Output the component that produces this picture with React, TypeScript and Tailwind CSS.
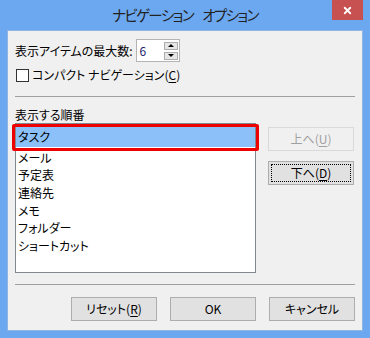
import { X } from 'lucide-react'

const font = "font-['Noto_Sans_CJK_JP',sans-serif] [font-feature-settings:'palt']"

const items = ['メール', '予定表', '連絡先', 'メモ', 'フォルダー', 'ショートカット']

function Mnemonic({ label, letter }: { label: string; letter: string }) {
  return (
    <span>
      {label}(<span className="underline underline-offset-2">{letter}</span>)
    </span>
  )
}

function Button({ children, disabled, focused }: { children: React.ReactNode; disabled?: boolean; focused?: boolean }) {
  return (
    <div
      className={`relative flex h-[24px] w-[86px] items-center justify-center border text-[12px] ${
        disabled
          ? 'border-[#d9d9d9] bg-[#f0f0f0] text-[#a0a0a0]'
          : 'border-[#adadad] bg-[#e1e1e1] text-[#000]'
      }`}
    >
      {focused && <div className="absolute inset-[2px] border border-dotted border-black" />}
      {children}
    </div>
  )
}

export default function App() {
  return (
    <div className={`flex h-[338px] w-[370px] flex-col bg-[#6ca8f0] px-[7px] pb-[7px] ${font}`}>
      {/* タイトルバー */}
      <div className="relative flex h-[30px] shrink-0 items-center justify-center">
        <span className="flex gap-[9px] pb-[1px] text-[14.5px] tracking-[-1.6px] text-[#222]">
          <span>ナビゲーション</span>
          <span>オプション</span>
        </span>
        <div className="absolute right-0 top-0 flex h-[20px] w-[31px] items-center justify-center bg-[#c75050]">
          <X className="h-[11px] w-[11px] text-white" strokeWidth={4} />
        </div>
      </div>

      {/* 本体 */}
      <div className="flex flex-1 flex-col border border-[#8fb4e3] bg-[#f0f0f0] px-[7px] pt-[8px] text-[12px] text-black">
        {/* 最大数 */}
        <div className="flex h-[23px] items-center">
          <span>表示アイテムの最大数:</span>
          <div className="ml-[3px] flex h-[23px] w-[44px] items-center border border-[#b4b4b4] bg-white pl-[3px]">
            <span className="flex-1 text-[#1a1a6a]">6</span>
            <div className="mr-[1px] flex flex-col gap-[2px]">
              <div className="flex h-[8px] w-[14px] items-center justify-center border border-[#adadad] bg-[#e6e6e6]">
                <div className="h-0 w-0 border-x-[3px] border-b-[3px] border-x-transparent border-b-black" />
              </div>
              <div className="flex h-[8px] w-[14px] items-center justify-center border border-[#adadad] bg-[#e6e6e6]">
                <div className="h-0 w-0 border-x-[3px] border-t-[3px] border-x-transparent border-t-black" />
              </div>
            </div>
          </div>
        </div>

        {/* コンパクト */}
        <div className="mt-[5px] flex h-[16px] items-center">
          <div className="ml-[1px] h-[13px] w-[13px] border border-[#333] bg-white" />
          <span className="ml-[3px]">
            コンパクト ナビゲーション<span>(</span>
            <span className="underline underline-offset-2">C</span>)
          </span>
        </div>

        <div className="mt-[13px] h-px bg-[#a0a0a0]" />

        <div className="mt-[10px] flex h-[16px] items-center">表示する順番</div>

        {/* 順番リスト */}
        <div className="flex gap-[12px]">
          <div className="relative h-[150px] w-[241px] border border-[#828790] bg-white">
            <div className="mt-[3px] mb-[2px] flex h-[20px] items-center bg-[#8cc0f8] pl-[2px]">タスク</div>
            {items.map((item) => (
              <div key={item} className="flex h-[17.6px] items-center pl-[2px]">
                {item}
              </div>
            ))}
            <div className="absolute left-[-4px] top-[0px] h-[27px] w-[247px] rounded-[2px] border-[3px] border-[#ee0000]" />
          </div>
          <div className="flex flex-col gap-[10px] pt-[4px]">
            <Button disabled>
              <Mnemonic label="上へ" letter="U" />
            </Button>
            <Button focused>
              <Mnemonic label="下へ" letter="D" />
            </Button>
          </div>
        </div>

        <div className="mt-[11px] h-px bg-[#a0a0a0]" />

        {/* 下部ボタン */}
        <div className="mt-[12px] flex justify-end gap-[13px]">
          <Button>
            <Mnemonic label="リセット" letter="R" />
          </Button>
          <Button>OK</Button>
          <Button>キャンセル</Button>
        </div>
      </div>
    </div>
  )
}
